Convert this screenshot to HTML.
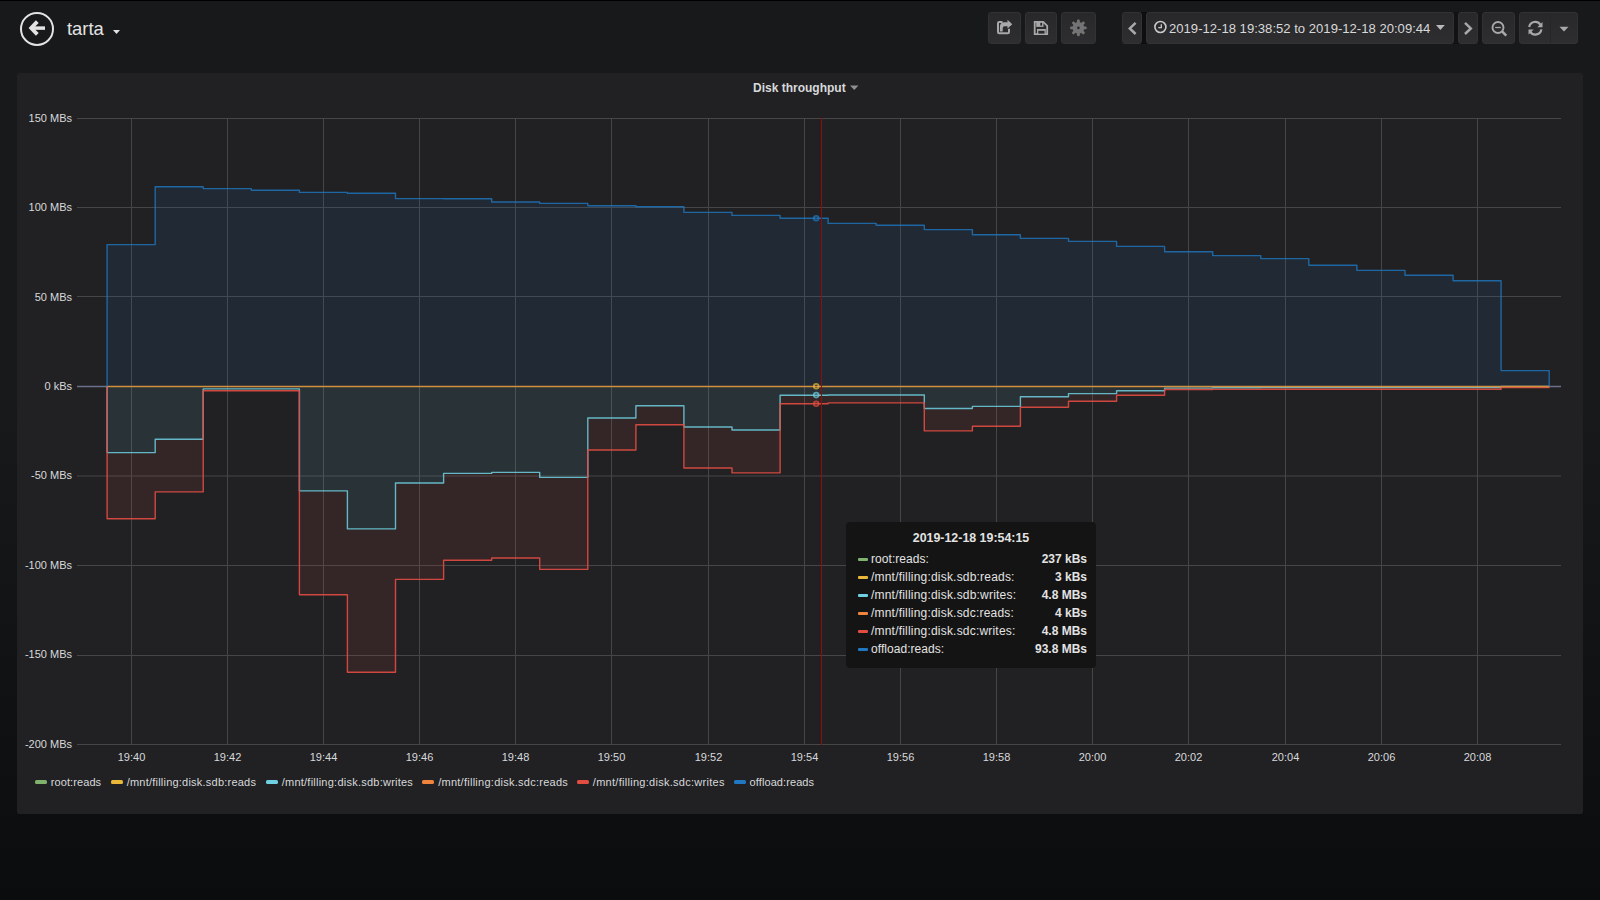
<!DOCTYPE html>
<html><head><meta charset="utf-8"><title>tarta - Grafana</title>
<style>
*{box-sizing:border-box;margin:0;padding:0}
html,body{width:1600px;height:900px;overflow:hidden}
body{background:linear-gradient(180deg,#000 0px,#000 1px,#18191b 1px,#18191b 400px,#0b0c0e 900px);font-family:"Liberation Sans",sans-serif;color:#d8d9da;position:relative}
.abs{position:absolute}
.title{position:absolute;left:67px;top:18px;font-size:18.4px;line-height:22px;color:#e3e3e3}
.grp{position:absolute;top:12px;height:32px;background:#0d0e10}
.btn{position:absolute;top:12px;height:32px;background:linear-gradient(180deg,#28282a,#2e2e30);border:1px solid #323234;border-radius:3px}
.panel{position:absolute;left:17px;top:73px;width:1566px;height:741px;background:#212124;border-radius:2px}
.ptitle{position:absolute;left:753px;top:80px;font-size:12px;line-height:16px;font-weight:bold;color:#d8d9da;white-space:nowrap}
.yl{position:absolute;left:0;width:72px;text-align:right;font-size:11px;line-height:14px;color:#d8d9da}
.xl{position:absolute;top:750px;width:60px;text-align:center;font-size:11px;line-height:14px;color:#d8d9da}
svg.chart{position:absolute;left:0;top:0}
.lm{position:absolute;top:780px;width:12px;height:4px;border-radius:1.5px}
.lt{position:absolute;top:775px;font-size:11px;line-height:14px;color:#d8d9da;white-space:nowrap}
.tt{position:absolute;left:846px;top:522px;width:250px;height:146px;background:#141414;border-radius:4px}
.tth{position:absolute;top:9px;left:0;width:250px;text-align:center;font-weight:bold;font-size:12.4px;line-height:14px;color:#e3e3e3}
.tr{position:absolute;left:12px;width:229px;height:18px;font-size:12px;line-height:18px;color:#e3e3e3}
.tr i{position:absolute;left:0;top:8px;width:10px;height:3px;border-radius:1px}
.tn{position:absolute;left:13px}
.tv{position:absolute;right:0;font-weight:bold}
.tp{position:absolute;left:1169px;top:21px;font-size:13.1px;line-height:16px;color:#d8d9da;white-space:nowrap}
</style></head><body>
<div class="title">tarta</div>
<div class="btn" style="left:988px;width:33px"></div>
<div class="btn" style="left:1025px;width:32px"></div>
<div class="btn" style="left:1061px;width:35px"></div>
<div class="grp" style="left:1141px;width:6px"></div>
<div class="grp" style="left:1453px;width:6px;background:#111214"></div>
<div class="grp" style="left:1477px;width:6px;background:#151618"></div>
<div class="btn" style="left:1122px;width:20px"></div>
<div class="btn" style="left:1146px;width:308px"></div>
<div class="btn" style="left:1458px;width:20px"></div>
<div class="btn" style="left:1482px;width:33px"></div>
<div class="btn" style="left:1519px;width:59px"></div>
<div class="abs" style="left:1550px;top:13px;width:1px;height:30px;background:#262628"></div>
<div class="tp">2019-12-18 19:38:52 to 2019-12-18 20:09:44</div>
<svg class="abs" style="left:0;top:0" width="1600" height="60" viewBox="0 0 1600 60">
<circle cx="37" cy="28.9" r="16" fill="none" stroke="#e3e3e3" stroke-width="2"/>
<path d="M37.3,21.6 L31.2,28 L37.3,34.4" stroke="#e3e3e3" stroke-width="3.8" fill="none" stroke-linejoin="miter"/><path d="M31.5,28.1 L45,28.1" stroke="#e3e3e3" stroke-width="3.5"/>
<path d="M113,30 L120,30 L116.5,34 Z" fill="#e3e3e3"/>
<path d="M1002.5,22 L999.2,22 Q998,22 998,23.2 L998,32 Q998,33.2 999.2,33.2 L1007.8,33.2 Q1009,33.2 1009,32 L1009,28.8" stroke="#a8a8a9" stroke-width="2" fill="none"/>
<path d="M1007.5,19.8 L1012.3,24.2 L1007.5,28.4 L1007.5,26.2 L1004.6,26.2 Q1002.7,26.2 1002.7,28.2 L1002.7,31.5 L999.9,31.5 L999.9,27 Q999.9,22.3 1004.2,22.3 L1007.5,22.3 Z" fill="#a8a8a9"/>
<path d="M1034.7,21.8 L1043.2,21.8 L1047.2,25.8 L1047.2,34.2 L1034.7,34.2 Z" stroke="#a8a8a9" stroke-width="1.8" fill="none" stroke-linejoin="miter"/>
<path d="M1036.2,21.8 L1043.5,21.8 L1043.5,26.9 L1036.2,26.9 Z" fill="#a8a8a9"/>
<rect x="1040.3" y="22.8" width="1.8" height="2.8" fill="#29292b"/>
<rect x="1037" y="29" width="8.8" height="5" fill="#a8a8a9"/>
<rect x="1038.3" y="30.8" width="6.2" height="2.8" fill="#2a2a2c"/>
<g transform="translate(1078.4,27.9)" fill="#747475"><circle r="5.9"/><rect x="-1.45" y="-8.3" width="2.9" height="5" rx="1.1" transform="rotate(0)"/><rect x="-1.45" y="-8.3" width="2.9" height="5" rx="1.1" transform="rotate(45)"/><rect x="-1.45" y="-8.3" width="2.9" height="5" rx="1.1" transform="rotate(90)"/><rect x="-1.45" y="-8.3" width="2.9" height="5" rx="1.1" transform="rotate(135)"/><rect x="-1.45" y="-8.3" width="2.9" height="5" rx="1.1" transform="rotate(180)"/><rect x="-1.45" y="-8.3" width="2.9" height="5" rx="1.1" transform="rotate(225)"/><rect x="-1.45" y="-8.3" width="2.9" height="5" rx="1.1" transform="rotate(270)"/><rect x="-1.45" y="-8.3" width="2.9" height="5" rx="1.1" transform="rotate(315)"/><circle r="1.3" fill="#2a2a2c"/></g>
<path d="M1135.6,22.8 L1129.8,28.4 L1135.6,34" stroke="#a8a8a9" stroke-width="2.5" fill="none"/>
<circle cx="1160.4" cy="27" r="5.5" stroke="#c9c9ca" stroke-width="1.6" fill="none"/>
<path d="M1161.3,24.2 L1161.3,27.6 L1158.3,27.6" stroke="#c9c9ca" stroke-width="1.3" fill="none"/>
<path d="M1436,25 L1444.8,25 L1440.4,30 Z" fill="#b9b9ba"/>
<path d="M1465,22.8 L1470.8,28.4 L1465,34" stroke="#a8a8a9" stroke-width="2.5" fill="none"/>
<circle cx="1498" cy="27.5" r="5.5" stroke="#a8a8a9" stroke-width="1.9" fill="none"/>
<path d="M1502,31.4 L1506.3,35.6" stroke="#a8a8a9" stroke-width="2.6"/>
<path d="M1495.2,27.5 L1500.8,27.5" stroke="#a8a8a9" stroke-width="1.3"/>
<path d="M1529.2,27 A6.1,6.1 0 0 1 1540.3,24.6 M1541.4,29.4 A6.1,6.1 0 0 1 1530.3,31.8" stroke="#a8a8a9" stroke-width="2.2" fill="none"/>
<path d="M1542.5,22 L1542.5,27.2 L1537.3,27.2 Z M1528.5,34.6 L1528.5,29.4 L1533.7,29.4 Z" fill="#a8a8a9"/>
<path d="M1559.5,26.8 L1568.5,26.8 L1564,31.5 Z" fill="#a8a8a9"/>
</svg>
<div class="panel"></div>
<div class="ptitle">Disk throughput</div>
<svg class="abs" style="left:0;top:0" width="1600" height="100"><path d="M850,85.5 L858.5,85.5 L854.25,90 Z" fill="#8e8e8f"/></svg>
<svg class="chart" width="1600" height="900"><g stroke="#464647" stroke-width="1"><line x1="77" y1="118.5" x2="1561" y2="118.5"/><line x1="77" y1="207.5" x2="1561" y2="207.5"/><line x1="77" y1="296.5" x2="1561" y2="296.5"/><line x1="77" y1="386.5" x2="1561" y2="386.5"/><line x1="77" y1="476.0" x2="1561" y2="476.0"/><line x1="77" y1="565.5" x2="1561" y2="565.5"/><line x1="77" y1="655.5" x2="1561" y2="655.5"/><line x1="77" y1="744.5" x2="1561" y2="744.5"/><line x1="131.5" y1="118" x2="131.5" y2="745"/><line x1="227.5" y1="118" x2="227.5" y2="745"/><line x1="323.5" y1="118" x2="323.5" y2="745"/><line x1="419.5" y1="118" x2="419.5" y2="745"/><line x1="515.5" y1="118" x2="515.5" y2="745"/><line x1="611.5" y1="118" x2="611.5" y2="745"/><line x1="708.5" y1="118" x2="708.5" y2="745"/><line x1="804.5" y1="118" x2="804.5" y2="745"/><line x1="900.5" y1="118" x2="900.5" y2="745"/><line x1="996.5" y1="118" x2="996.5" y2="745"/><line x1="1092.5" y1="118" x2="1092.5" y2="745"/><line x1="1188.5" y1="118" x2="1188.5" y2="745"/><line x1="1285.5" y1="118" x2="1285.5" y2="745"/><line x1="1381.5" y1="118" x2="1381.5" y2="745"/><line x1="1477.5" y1="118" x2="1477.5" y2="745"/></g>
<path d="M107.1,244.6 L155.2,244.6 L155.2,186.8 L203.2,186.8 L203.2,188.6 L251.3,188.6 L251.3,190.2 L299.4,190.2 L299.4,192.4 L347.4,192.4 L347.4,193.2 L395.5,193.2 L395.5,198.6 L443.6,198.6 L443.6,198.8 L491.7,198.8 L491.7,202.0 L539.7,202.0 L539.7,203.4 L587.8,203.4 L587.8,205.8 L635.9,205.8 L635.9,206.8 L683.9,206.8 L683.9,212.4 L732.0,212.4 L732.0,215.4 L780.1,215.4 L780.1,218.2 L828.1,218.2 L828.1,223.4 L876.2,223.4 L876.2,225.2 L924.3,225.2 L924.3,229.6 L972.4,229.6 L972.4,234.8 L1020.4,234.8 L1020.4,238.4 L1068.5,238.4 L1068.5,241.4 L1116.6,241.4 L1116.6,246.4 L1164.6,246.4 L1164.6,251.8 L1212.7,251.8 L1212.7,255.6 L1260.8,255.6 L1260.8,258.6 L1308.8,258.6 L1308.8,265.2 L1356.9,265.2 L1356.9,270.4 L1405.0,270.4 L1405.0,275.2 L1453.1,275.2 L1453.1,280.8 L1501.1,280.8 L1501.1,370.6 L1549.2,370.6 L1549.2,386.5 L1501.1,386.5 L1501.1,386.5 L1453.1,386.5 L1453.1,386.5 L1405.0,386.5 L1405.0,386.5 L1356.9,386.5 L1356.9,386.5 L1308.8,386.5 L1308.8,386.5 L1260.8,386.5 L1260.8,386.5 L1212.7,386.5 L1212.7,386.5 L1164.6,386.5 L1164.6,386.5 L1116.6,386.5 L1116.6,386.5 L1068.5,386.5 L1068.5,386.5 L1020.4,386.5 L1020.4,386.5 L972.4,386.5 L972.4,386.5 L924.3,386.5 L924.3,386.5 L876.2,386.5 L876.2,386.5 L828.1,386.5 L828.1,386.5 L780.1,386.5 L780.1,386.5 L732.0,386.5 L732.0,386.5 L683.9,386.5 L683.9,386.5 L635.9,386.5 L635.9,386.5 L587.8,386.5 L587.8,386.5 L539.7,386.5 L539.7,386.5 L491.7,386.5 L491.7,386.5 L443.6,386.5 L443.6,386.5 L395.5,386.5 L395.5,386.5 L347.4,386.5 L347.4,386.5 L299.4,386.5 L299.4,386.5 L251.3,386.5 L251.3,386.5 L203.2,386.5 L203.2,386.5 L155.2,386.5 L155.2,386.5 L107.1,386.5 Z" fill="rgba(31,120,193,0.1)"/>
<path d="M107.1,386.5 L155.2,386.5 L155.2,386.5 L203.2,386.5 L203.2,386.5 L251.3,386.5 L251.3,386.5 L299.4,386.5 L299.4,386.5 L347.4,386.5 L347.4,386.5 L395.5,386.5 L395.5,386.5 L443.6,386.5 L443.6,386.5 L491.7,386.5 L491.7,386.5 L539.7,386.5 L539.7,386.5 L587.8,386.5 L587.8,386.5 L635.9,386.5 L635.9,386.5 L683.9,386.5 L683.9,386.5 L732.0,386.5 L732.0,386.5 L780.1,386.5 L780.1,386.5 L828.1,386.5 L828.1,386.5 L876.2,386.5 L876.2,386.5 L924.3,386.5 L924.3,386.5 L972.4,386.5 L972.4,386.5 L1020.4,386.5 L1020.4,386.5 L1068.5,386.5 L1068.5,386.5 L1116.6,386.5 L1116.6,386.5 L1164.6,386.5 L1164.6,386.5 L1212.7,386.5 L1212.7,386.5 L1260.8,386.5 L1260.8,386.5 L1308.8,386.5 L1308.8,386.5 L1356.9,386.5 L1356.9,386.5 L1405.0,386.5 L1405.0,386.5 L1453.1,386.5 L1453.1,386.5 L1501.1,386.5 L1501.1,386.5 L1549.2,386.5 L1549.2,386.5 L1501.1,386.5 L1501.1,387.5 L1453.1,387.5 L1453.1,387.5 L1405.0,387.5 L1405.0,387.5 L1356.9,387.5 L1356.9,387.5 L1308.8,387.5 L1308.8,387.6 L1260.8,387.6 L1260.8,387.8 L1212.7,387.8 L1212.7,388.1 L1164.6,388.1 L1164.6,390.8 L1116.6,390.8 L1116.6,393.6 L1068.5,393.6 L1068.5,396.8 L1020.4,396.8 L1020.4,406.4 L972.4,406.4 L972.4,408.5 L924.3,408.5 L924.3,395.0 L876.2,395.0 L876.2,395.0 L828.1,395.0 L828.1,395.2 L780.1,395.2 L780.1,430.0 L732.0,430.0 L732.0,427.0 L683.9,427.0 L683.9,405.7 L635.9,405.7 L635.9,418.0 L587.8,418.0 L587.8,477.4 L539.7,477.4 L539.7,472.4 L491.7,472.4 L491.7,473.4 L443.6,473.4 L443.6,483.0 L395.5,483.0 L395.5,528.9 L347.4,528.9 L347.4,490.9 L299.4,490.9 L299.4,388.9 L251.3,388.9 L251.3,388.9 L203.2,388.9 L203.2,439.3 L155.2,439.3 L155.2,452.6 L107.1,452.6 Z" fill="rgba(110,208,224,0.1)"/>
<path d="M107.1,452.6 L155.2,452.6 L155.2,439.3 L203.2,439.3 L203.2,388.9 L251.3,388.9 L251.3,388.9 L299.4,388.9 L299.4,490.9 L347.4,490.9 L347.4,528.9 L395.5,528.9 L395.5,483.0 L443.6,483.0 L443.6,473.4 L491.7,473.4 L491.7,472.4 L539.7,472.4 L539.7,477.4 L587.8,477.4 L587.8,418.0 L635.9,418.0 L635.9,405.7 L683.9,405.7 L683.9,427.0 L732.0,427.0 L732.0,430.0 L780.1,430.0 L780.1,395.2 L828.1,395.2 L828.1,395.0 L876.2,395.0 L876.2,395.0 L924.3,395.0 L924.3,408.5 L972.4,408.5 L972.4,406.4 L1020.4,406.4 L1020.4,396.8 L1068.5,396.8 L1068.5,393.6 L1116.6,393.6 L1116.6,390.8 L1164.6,390.8 L1164.6,388.1 L1212.7,388.1 L1212.7,387.8 L1260.8,387.8 L1260.8,387.6 L1308.8,387.6 L1308.8,387.5 L1356.9,387.5 L1356.9,387.5 L1405.0,387.5 L1405.0,387.5 L1453.1,387.5 L1453.1,387.5 L1501.1,387.5 L1501.1,386.5 L1549.2,386.5 L1549.2,387.5 L1501.1,387.5 L1501.1,389.3 L1453.1,389.3 L1453.1,389.3 L1405.0,389.3 L1405.0,389.3 L1356.9,389.3 L1356.9,389.3 L1308.8,389.3 L1308.8,389.3 L1260.8,389.3 L1260.8,389.4 L1212.7,389.4 L1212.7,389.5 L1164.6,389.5 L1164.6,395.3 L1116.6,395.3 L1116.6,401.2 L1068.5,401.2 L1068.5,407.3 L1020.4,407.3 L1020.4,426.2 L972.4,426.2 L972.4,430.9 L924.3,430.9 L924.3,402.9 L876.2,402.9 L876.2,402.9 L828.1,402.9 L828.1,403.8 L780.1,403.8 L780.1,472.9 L732.0,472.9 L732.0,468.0 L683.9,468.0 L683.9,424.8 L635.9,424.8 L635.9,450.0 L587.8,450.0 L587.8,569.4 L539.7,569.4 L539.7,558.0 L491.7,558.0 L491.7,560.2 L443.6,560.2 L443.6,579.4 L395.5,579.4 L395.5,672.2 L347.4,672.2 L347.4,594.7 L299.4,594.7 L299.4,390.8 L251.3,390.8 L251.3,390.8 L203.2,390.8 L203.2,491.9 L155.2,491.9 L155.2,518.7 L107.1,518.7 Z" fill="rgba(226,77,66,0.1)"/>
<path d="M77,386.5 L107.1,386.5 M1549.2,386.5 L1561,386.5" stroke="#6b6f8a" stroke-width="1.5" fill="none"/>
<path d="M107.1,386.5 L107.1,452.6 L155.2,452.6 L155.2,439.3 L203.2,439.3 L203.2,388.9 L251.3,388.9 L251.3,388.9 L299.4,388.9 L299.4,490.9 L347.4,490.9 L347.4,528.9 L395.5,528.9 L395.5,483.0 L443.6,483.0 L443.6,473.4 L491.7,473.4 L491.7,472.4 L539.7,472.4 L539.7,477.4 L587.8,477.4 L587.8,418.0 L635.9,418.0 L635.9,405.7 L683.9,405.7 L683.9,427.0 L732.0,427.0 L732.0,430.0 L780.1,430.0 L780.1,395.2 L828.1,395.2 L828.1,395.0 L876.2,395.0 L876.2,395.0 L924.3,395.0 L924.3,408.5 L972.4,408.5 L972.4,406.4 L1020.4,406.4 L1020.4,396.8 L1068.5,396.8 L1068.5,393.6 L1116.6,393.6 L1116.6,390.8 L1164.6,390.8 L1164.6,388.1 L1212.7,388.1 L1212.7,387.8 L1260.8,387.8 L1260.8,387.6 L1308.8,387.6 L1308.8,387.5 L1356.9,387.5 L1356.9,387.5 L1405.0,387.5 L1405.0,387.5 L1453.1,387.5 L1453.1,387.5 L1501.1,387.5 L1501.1,386.5 L1549.2,386.5 L1549.2,386.5" stroke="#6ED0E0" stroke-opacity="0.85" stroke-width="1.4" fill="none" stroke-linejoin="round"/>
<path d="M107.1,386.5 L107.1,518.7 L155.2,518.7 L155.2,491.9 L203.2,491.9 L203.2,390.8 L251.3,390.8 L251.3,390.8 L299.4,390.8 L299.4,594.7 L347.4,594.7 L347.4,672.2 L395.5,672.2 L395.5,579.4 L443.6,579.4 L443.6,560.2 L491.7,560.2 L491.7,558.0 L539.7,558.0 L539.7,569.4 L587.8,569.4 L587.8,450.0 L635.9,450.0 L635.9,424.8 L683.9,424.8 L683.9,468.0 L732.0,468.0 L732.0,472.9 L780.1,472.9 L780.1,403.8 L828.1,403.8 L828.1,402.9 L876.2,402.9 L876.2,402.9 L924.3,402.9 L924.3,430.9 L972.4,430.9 L972.4,426.2 L1020.4,426.2 L1020.4,407.3 L1068.5,407.3 L1068.5,401.2 L1116.6,401.2 L1116.6,395.3 L1164.6,395.3 L1164.6,389.5 L1212.7,389.5 L1212.7,389.4 L1260.8,389.4 L1260.8,389.3 L1308.8,389.3 L1308.8,389.3 L1356.9,389.3 L1356.9,389.3 L1405.0,389.3 L1405.0,389.3 L1453.1,389.3 L1453.1,389.3 L1501.1,389.3 L1501.1,387.5 L1549.2,387.5 L1549.2,386.5" stroke="#E24D42" stroke-opacity="0.9" stroke-width="1.4" fill="none" stroke-linejoin="round"/>
<path d="M107.1,386.5 L1549.2,386.5" stroke="#d39140" stroke-width="1.6" fill="none"/>
<path d="M107.1,386.5 L107.1,244.6 L155.2,244.6 L155.2,186.8 L203.2,186.8 L203.2,188.6 L251.3,188.6 L251.3,190.2 L299.4,190.2 L299.4,192.4 L347.4,192.4 L347.4,193.2 L395.5,193.2 L395.5,198.6 L443.6,198.6 L443.6,198.8 L491.7,198.8 L491.7,202.0 L539.7,202.0 L539.7,203.4 L587.8,203.4 L587.8,205.8 L635.9,205.8 L635.9,206.8 L683.9,206.8 L683.9,212.4 L732.0,212.4 L732.0,215.4 L780.1,215.4 L780.1,218.2 L828.1,218.2 L828.1,223.4 L876.2,223.4 L876.2,225.2 L924.3,225.2 L924.3,229.6 L972.4,229.6 L972.4,234.8 L1020.4,234.8 L1020.4,238.4 L1068.5,238.4 L1068.5,241.4 L1116.6,241.4 L1116.6,246.4 L1164.6,246.4 L1164.6,251.8 L1212.7,251.8 L1212.7,255.6 L1260.8,255.6 L1260.8,258.6 L1308.8,258.6 L1308.8,265.2 L1356.9,265.2 L1356.9,270.4 L1405.0,270.4 L1405.0,275.2 L1453.1,275.2 L1453.1,280.8 L1501.1,280.8 L1501.1,370.6 L1549.2,370.6 L1549.2,386.5" stroke="#1F78C1" stroke-opacity="0.8" stroke-width="1.4" fill="none" stroke-linejoin="round"/>
<line x1="821.5" y1="118" x2="821.5" y2="745" stroke="#920c0c" stroke-width="1"/>
<circle cx="816.2" cy="218.3" r="2.4" fill="none" stroke="#1F78C1" stroke-opacity="0.72" stroke-width="1.8"/>
<circle cx="816.2" cy="386.3" r="2.4" fill="none" stroke="#EAB839" stroke-opacity="0.72" stroke-width="1.8"/>
<circle cx="816.2" cy="395.1" r="2.4" fill="none" stroke="#6ED0E0" stroke-opacity="0.72" stroke-width="1.8"/>
<circle cx="816.2" cy="403.7" r="2.4" fill="none" stroke="#E24D42" stroke-opacity="0.72" stroke-width="1.8"/></svg>
<div class="yl" style="top:111.0px">150 MBs</div><div class="yl" style="top:200.0px">100 MBs</div><div class="yl" style="top:290.0px">50 MBs</div><div class="yl" style="top:379.0px">0 kBs</div><div class="yl" style="top:468.0px">-50 MBs</div><div class="yl" style="top:558.0px">-100 MBs</div><div class="yl" style="top:647.0px">-150 MBs</div><div class="yl" style="top:737.0px">-200 MBs</div>
<div class="xl" style="left:101.5px">19:40</div><div class="xl" style="left:197.5px">19:42</div><div class="xl" style="left:293.5px">19:44</div><div class="xl" style="left:389.5px">19:46</div><div class="xl" style="left:485.5px">19:48</div><div class="xl" style="left:581.5px">19:50</div><div class="xl" style="left:678.5px">19:52</div><div class="xl" style="left:774.5px">19:54</div><div class="xl" style="left:870.5px">19:56</div><div class="xl" style="left:966.5px">19:58</div><div class="xl" style="left:1062.5px">20:00</div><div class="xl" style="left:1158.5px">20:02</div><div class="xl" style="left:1255.5px">20:04</div><div class="xl" style="left:1351.5px">20:06</div><div class="xl" style="left:1447.5px">20:08</div>
<i class="lm" style="left:35.0px;background:#7EB26D"></i><span class="lt" style="left:50.7px;letter-spacing:0.10px">root:reads</span><i class="lm" style="left:111.0px;background:#EAB839"></i><span class="lt" style="left:126.7px;letter-spacing:0.22px">/mnt/filling:disk.sdb:reads</span><i class="lm" style="left:265.8px;background:#6ED0E0"></i><span class="lt" style="left:281.7px;letter-spacing:0.24px">/mnt/filling:disk.sdb:writes</span><i class="lm" style="left:422.3px;background:#EF843C"></i><span class="lt" style="left:438.2px;letter-spacing:0.26px">/mnt/filling:disk.sdc:reads</span><i class="lm" style="left:577.0px;background:#E24D42"></i><span class="lt" style="left:592.8px;letter-spacing:0.28px">/mnt/filling:disk.sdc:writes</span><i class="lm" style="left:734.0px;background:#1F78C1"></i><span class="lt" style="left:749.6px;letter-spacing:0.09px">offload:reads</span>
<div class="tt"><div class="tth">2019-12-18 19:54:15</div><div class="tr" style="top:28px"><i style="background:#7EB26D"></i><span class="tn" style="letter-spacing:0.05px">root:reads:</span><span class="tv">237 kBs</span></div><div class="tr" style="top:46px"><i style="background:#EAB839"></i><span class="tn" style="letter-spacing:0.20px">/mnt/filling:disk.sdb:reads:</span><span class="tv">3 kBs</span></div><div class="tr" style="top:64px"><i style="background:#6ED0E0"></i><span class="tn" style="letter-spacing:0.20px">/mnt/filling:disk.sdb:writes:</span><span class="tv">4.8 MBs</span></div><div class="tr" style="top:82px"><i style="background:#EF843C"></i><span class="tn" style="letter-spacing:0.20px">/mnt/filling:disk.sdc:reads:</span><span class="tv">4 kBs</span></div><div class="tr" style="top:100px"><i style="background:#E24D42"></i><span class="tn" style="letter-spacing:0.20px">/mnt/filling:disk.sdc:writes:</span><span class="tv">4.8 MBs</span></div><div class="tr" style="top:118px"><i style="background:#1F78C1"></i><span class="tn" style="letter-spacing:0.05px">offload:reads:</span><span class="tv">93.8 MBs</span></div></div>
</body></html>
